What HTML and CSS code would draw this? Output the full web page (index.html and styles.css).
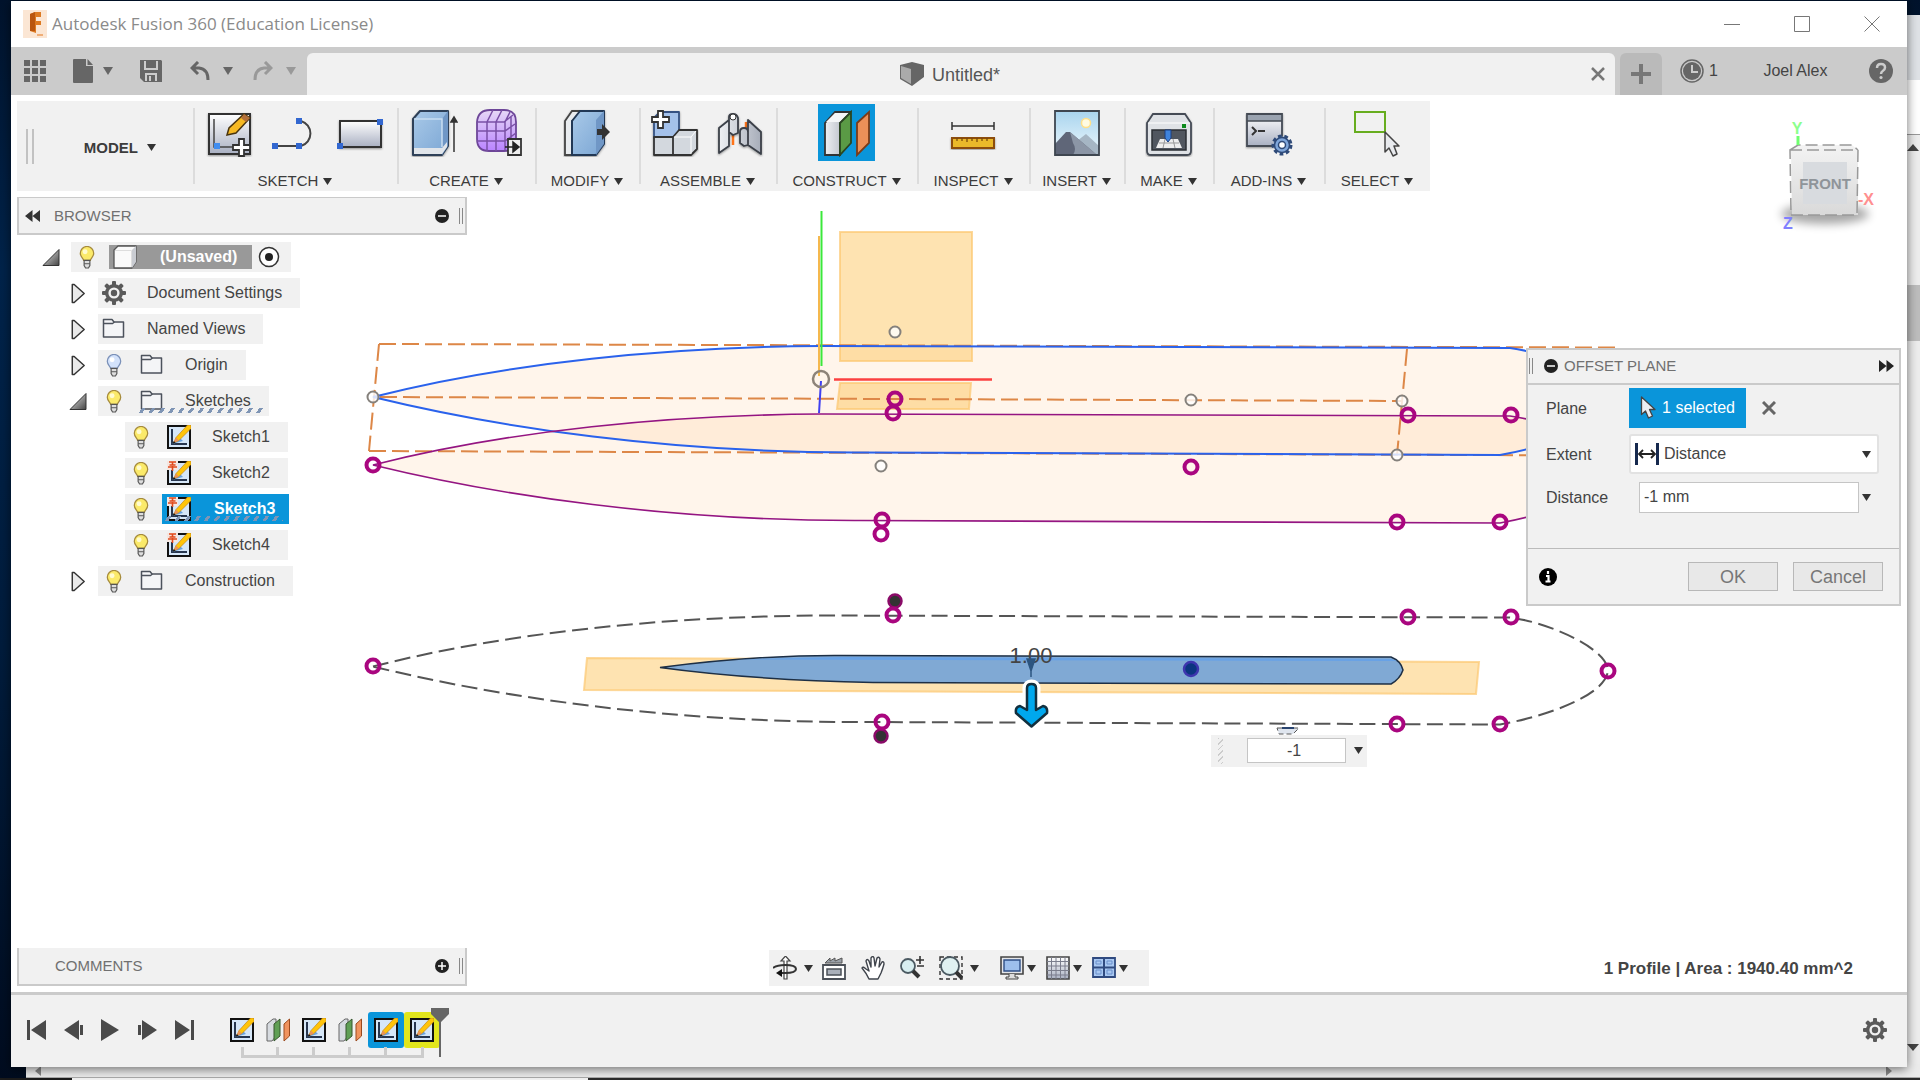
FILE: index.html
```html
<!DOCTYPE html>
<html lang="en">
<head>
<meta charset="utf-8">
<title>Autodesk Fusion 360 (Education License)</title>
<link rel="stylesheet" href="styles.css">
</head>
<body>
<svg class="defs" aria-hidden="true">
  <defs>
    <linearGradient id="steel" x1="0" y1="0" x2="0" y2="1"><stop offset="0" stop-color="#fff"/><stop offset="1" stop-color="#a9b0c2"/></linearGradient>
    <linearGradient id="blueFace" x1="0" y1="0" x2="1" y2="1"><stop offset="0" stop-color="#a9c9e8"/><stop offset="1" stop-color="#7ba6d4"/></linearGradient>
    <linearGradient id="silver" x1="0" y1="0" x2="1" y2="0"><stop offset="0" stop-color="#eef0f3"/><stop offset="1" stop-color="#a7adb9"/></linearGradient>
    <linearGradient id="violet" x1="0" y1="0" x2="0" y2="1"><stop offset="0" stop-color="#e6d8f6"/><stop offset="1" stop-color="#b983ff"/></linearGradient>
    <linearGradient id="sky" x1="0" y1="0" x2="0" y2="1"><stop offset="0" stop-color="#a8d4ee"/><stop offset="1" stop-color="#eef8fd"/></linearGradient>
    <linearGradient id="caretDark" x1="0" y1="0" x2="1" y2="1"><stop offset="0" stop-color="#eee"/><stop offset="1" stop-color="#444"/></linearGradient>
    <linearGradient id="cubeFace" x1="0" y1="0" x2="0" y2="1"><stop offset="0" stop-color="#f3f3f3"/><stop offset="1" stop-color="#d9d9d9"/></linearGradient>
    <filter id="soft" x="-30%" y="-60%" width="160%" height="220%"><feGaussianBlur stdDeviation="5"/></filter>
    <filter id="drop" x="-10%" y="-10%" width="130%" height="130%"><feDropShadow dx="0" dy="1" stdDeviation="1" flood-opacity=".4"/></filter>

    <symbol id="i-down" viewBox="0 0 10 10"><path d="M0 1h10L5 9z" fill="currentColor"/></symbol>

    <symbol id="i-bulb" viewBox="0 0 16 24"><path d="M4.500 15C4.500 13 1 11.500 1 7.500a7 7 0 0 1 14 0C15 11.500 11.500 13 11.500 15z" fill="#fbea6a" stroke="#a58a3c" stroke-width="1.300"/><circle cx="6" cy="6" r="2.600" fill="#fffbd0"/><path d="M5 15h6v5.500L9.500 23h-3L5 20.500z" fill="#ddd" stroke="#555" stroke-width="1.200"/><path d="M5 18.500h6" stroke="#555"/></symbol>
    <symbol id="i-bulb-off" viewBox="0 0 16 24"><path d="M4.500 15C4.500 13 1 11.500 1 7.500a7 7 0 0 1 14 0C15 11.500 11.500 13 11.500 15z" fill="#d3e2fb" stroke="#7a90b8" stroke-width="1.300"/><circle cx="6" cy="6" r="2.600" fill="#fff"/><path d="M5 15h6v5.500L9.500 23h-3L5 20.500z" fill="#ddd" stroke="#555" stroke-width="1.200"/><path d="M5 18.500h6" stroke="#555"/></symbol>
    <symbol id="i-folder" viewBox="0 0 24 24"><path d="M1.500 4V2.500H10L12 5h9.500V20H1.500z" fill="#f4f5f7" stroke="#4c525c" stroke-width="1.500" stroke-linejoin="round"/><path d="M1.500 6.500h9L12.500 5" fill="none" stroke="#4c525c" stroke-width="1.300"/></symbol>
    <symbol id="i-gear" viewBox="0 0 24 24"><g fill="#5a5a5a"><g id="teeth"><rect x="10" y="0" width="4" height="24" rx="1"/><rect x="0" y="10" width="24" height="4" rx="1"/></g><use href="#teeth" transform="rotate(45 12 12)"/><circle cx="12" cy="12" r="9"/></g><circle cx="12" cy="12" r="5.600" fill="#f1f1f1"/><circle cx="12" cy="12" r="3.200" fill="#5a5a5a"/></symbol>
    <symbol id="i-open" viewBox="0 0 18 18"><path d="M1 17h16V1z" fill="url(#caretDark)" stroke="#333" stroke-linejoin="round"/></symbol>
    <symbol id="i-closed" viewBox="0 0 16 22"><path d="M2 1.500h2L14.500 11 4 20.500H2z" fill="#e9e9e9" stroke="#333" stroke-width="1.500" stroke-linejoin="round"/></symbol>
    <symbol id="i-body" viewBox="0 0 24 24"><path d="M1 5 5 1h18v16l-4 6H1z" fill="#fafafa" stroke="#555" stroke-width="1.300" stroke-linejoin="round"/><path d="M19 5l4-4v16l-4 6z" fill="#c9ccd2"/><path d="M2 5.500h16.500V22" fill="none" stroke="#ddd"/></symbol>
    <symbol id="i-sketch" viewBox="0 0 24 24"><rect x="1" y="1" width="22" height="22" fill="#d6e7f8" stroke="#111" stroke-width="2"/><path d="M5 4v15h15" fill="none" stroke="#27364f" stroke-width="2"/><path d="M5 19l7-7 4 4z" fill="#69a3e0"/><path d="M6.500 18 9 12.500 20.500 0H24v3.500L12 15.500z" fill="#ffc40a" stroke="#b87a10" stroke-width=".6"/><path d="M6.500 18 9 12.500 12 15.500z" fill="#e8935a"/><path d="M5.500 19l1.300-3L8.500 17.500z" fill="#111"/></symbol>
    <symbol id="i-sketch-pin" viewBox="0 0 24 24"><use href="#i-sketch"/><path d="M0 0h11v9H0z" fill="#f6e6e0"/><path d="M2 1h7M5.500 1v3M1 6h9M5.500 5v5M2.500 4h6" stroke="#e0491c" stroke-width="1.600" fill="none"/></symbol>
    <symbol id="i-plane" viewBox="0 0 24 24"><path d="M1 6 7 1h3v17l-4 5H1z" fill="#d7dbe0" stroke="#666" stroke-linejoin="round"/><path d="M8 6l6-5v17l-6 5z" fill="#5f9f55" stroke="#37562f"/><path d="M18 6l5.500-5v17L18 23z" fill="#f0935e" stroke="#9b4a1e"/></symbol>
    <symbol id="i-cursor" viewBox="0 0 16 24"><path d="M1.500 1v17.500l4-3.500 3 7 4-2-3-6.500H15z" fill="#eceef2" stroke="#444" stroke-width="1.300" stroke-linejoin="round"/></symbol>
  </defs>
</svg>

<div class="desktop">
  <div class="back-window" aria-hidden="true">
    <div class="back-right">
      <span class="back-tabs"></span><span class="back-page"></span><span class="back-arrow"><svg viewBox="0 0 12 8"><path d="M0 7h12L6 0z"/></svg></span><span class="back-thumb"></span><span class="back-fill"></span><span class="back-arrow"><svg viewBox="0 0 12 8"><path d="M0 0h12L6 7z"/></svg></span>
    </div>
    <div class="back-bottom"><span class="back-tri left"></span><span class="back-tri right"></span></div>
    <div class="taskbar"></div>
  </div>

  <main class="window">
    <header class="titlebar">
      <svg class="logo" viewBox="0 0 24 28"><rect width="24" height="28" fill="#fbe6d4"/><path d="M7 4 12 2h6v5h-5v4h5v4h-5v8l-6-2z" fill="#dd7a22"/><path d="M7 4l5-2v19l-5 0z" fill="#b9560f"/><path d="M14 25h6" stroke="#efae78" stroke-width="2"/></svg>
      <h1>Autodesk Fusion 360 (Education License)</h1>
      <div class="window-buttons">
        <button aria-label="Minimize"><svg viewBox="0 0 16 16"><path d="M0 8.500h16"/></svg></button>
        <button aria-label="Maximize"><svg viewBox="0 0 16 16"><path d="M.5.500h15v15H.5z"/></svg></button>
        <button aria-label="Close"><svg viewBox="0 0 16 16"><path d="M.5.500l15 15M15.500.500l-15 15"/></svg></button>
      </div>
    </header>

    <div class="tabbar">
      <div class="quick">
        <button aria-label="Data panel"><svg width="22" height="22" viewBox="0 0 22 22"><path d="M0 0h6v6H0zM8 0h6v6H8zM16 0h6v6h-6zM0 8h6v6H0zM8 8h6v6H8zM16 8h6v6h-6zM0 16h6v6H0zM8 16h6v6H8zM16 16h6v6h-6z" fill="#666"/></svg></button>
        <button aria-label="File" class="with-caret file"><svg width="20" height="24" viewBox="0 0 20 24"><path d="M1 0h12v7h7v16a1 1 0 0 1-1 1H1a1 1 0 0 1-1-1V1a1 1 0 0 1 1-1z" fill="#666"/><path d="M14.500 0 20 6h-5.500z" fill="#666"/></svg><svg class="caret"><use href="#i-down"/></svg></button>
        <button aria-label="Save" class="save"><svg width="22" height="22" viewBox="0 0 22 22"><path d="M0 0h21l1 1v21H4l-4-4z" fill="#666"/><path d="M5 1v8h12V1" fill="none" stroke="#ccc" stroke-width="2"/><path d="M6 21v-7h10v7M10 16v5" fill="none" stroke="#ccc" stroke-width="2"/></svg></button>
        <button aria-label="Undo" class="with-caret undo"><svg width="20" height="20" viewBox="0 0 20 20"><path d="M8 1 2 7l6 6M2 7h7q9 1 9 12" fill="none" stroke="#666" stroke-width="3"/></svg><svg class="caret"><use href="#i-down"/></svg></button>
        <button aria-label="Redo" class="with-caret redo"><svg width="20" height="20" viewBox="0 0 20 20"><path d="M12 1l6 6-6 6M18 7h-7q-9 1-9 12" fill="none" stroke="#999" stroke-width="3"/></svg><svg class="caret"><use href="#i-down"/></svg></button>
      </div>
      <div class="doc-tab">
        <svg width="24" height="24" viewBox="0 0 24 24"><path d="M0 3 12 0l12 3v12l-12 9L0 17z" fill="#666"/><path d="M1 4l10 3v15L1 16z" fill="#aaa"/></svg>
        <span>Untitled*</span>
        <button class="tab-close" aria-label="Close tab"><svg width="14" height="14" viewBox="0 0 14 14"><path d="M1 1l12 12M13 1 1 13" stroke="#777" stroke-width="2.500"/></svg></button>
      </div>
      <button class="new-tab" aria-label="New tab"><svg width="20" height="20" viewBox="0 0 20 20"><path d="M10 0v20M0 10h20" stroke="#777" stroke-width="4"/></svg></button>
      <div class="account">
        <button class="jobs"><svg width="24" height="24" viewBox="0 0 24 24"><circle cx="12" cy="12" r="11" fill="none" stroke="#666" stroke-width="1.500"/><circle cx="12" cy="12" r="9" fill="#666"/><path d="M12 6v7h6" fill="none" stroke="#ccc" stroke-width="2"/></svg>1</button>
        <button class="user">Joel Alex</button>
        <button aria-label="Help"><svg width="24" height="24" viewBox="0 0 24 24"><circle cx="12" cy="12" r="12" fill="#666"/><path d="M8 9q0-4 4-4t4 3.500q0 2-2 3.200T12 15" fill="none" stroke="#ccc" stroke-width="2.500"/><circle cx="12" cy="18.500" r="1.600" fill="#ccc"/></svg></button>
      </div>
    </div>

    <section class="viewport">
      <svg class="canvas" viewBox="11 95 1896 897" aria-label="Model canvas">
        <defs>
          <path id="hull" d="M373 397C510 362 670 347 821 346L1510 348C1545 352 1607 378 1608 401C1606 425 1550 446 1500 455L860 452.500C670 453 500 428 373 397z"/>
          <g id="node"><circle r="6.500" fill="none" stroke="#a9067f" stroke-width="4"/></g>
          <g id="dot"><circle r="6.500" fill="#333" stroke="#8a0a68" stroke-width="2.500"/></g>
          <g id="pt"><circle r="5.500" fill="#fff" fill-opacity=".8" stroke="#85817c" stroke-width="2"/></g>
        </defs>
        <use href="#hull" fill="#ffa038" fill-opacity=".1"/>
        <use href="#hull" y="68" fill="#ffa038" fill-opacity=".1"/>
        <g fill="#fcb93c" fill-opacity=".4" stroke="#fcc870" stroke-opacity=".7" stroke-width="2">
          <path d="M840 232h132v129H840zM840 383h131l-2 26H837zM587 658l892 4-3 32-892-4z"/>
        </g>
        <g fill="none" stroke="#dd8747" stroke-width="2" stroke-dasharray="17 6">
          <path d="M379 344 1615 347.500M379 344 369 451M369 451 1610 455.500M380 397 1402 401M1407 349 1397 455"/>
        </g>
        <use href="#hull" fill="none" stroke="#2a62ec" stroke-width="2"/>
        <use href="#hull" y="68" fill="none" stroke="#941582" stroke-width="1.600"/>
        <use href="#hull" y="269.500" fill="none" stroke="#555" stroke-width="2" stroke-dasharray="16 6.500"/>
        <path d="M819 236v140" stroke="#f5b84e" stroke-width="2"/>
        <path d="M821.500 211v155" stroke="#3be83b" stroke-width="2"/>
        <path d="M834 379.500h158" stroke="#fb4040" stroke-width="2.500"/>
        <path d="M821 381l-2 32" stroke="#4040f0" stroke-width="2"/>
        <circle cx="821" cy="379" r="8" fill="none" stroke="#8d8379" stroke-width="2.500"/>
        <path d="M660 667.500C710 661 770 655 842 655.500L1391 657Q1401 661 1403 670Q1400 679 1391 684L873 682.500C800 681 730 677 660 667.500z" fill="#80a9d4" stroke="#1d2f45" stroke-width="1.500"/>
        <path d="M735 659.500 842 657l549 2 6 2z" fill="#68a2e6"/>
        <text x="1031" y="663" class="dim">1.00</text>
        <path d="M1031 659v18M1027 659l4 12 4-12z" stroke="#2c5580" stroke-width="1.500" fill="#2c5580"/>
        <use href="#pt" x="895" y="332"/><use href="#pt" x="881" y="466"/><use href="#pt" x="373" y="397"/><use href="#pt" x="1191" y="400"/><use href="#pt" x="1402" y="401"/><use href="#pt" x="1397" y="455"/>
        <use href="#node" x="895" y="399"/><use href="#node" x="893" y="413"/><use href="#node" x="882" y="520"/><use href="#node" x="881" y="534"/><use href="#node" x="373" y="465"/><use href="#node" x="1191" y="467"/><use href="#node" x="1408" y="415"/><use href="#node" x="1511" y="415"/><use href="#node" x="1397" y="522"/><use href="#node" x="1500" y="522"/>
        <use href="#dot" x="895" y="601"/><use href="#dot" x="881" y="736"/>
        <use href="#node" x="893" y="615"/><use href="#node" x="882" y="722"/><use href="#node" x="373" y="666"/><use href="#node" x="1408" y="617"/><use href="#node" x="1511" y="617"/><use href="#node" x="1608" y="671"/><use href="#node" x="1397" y="724"/><use href="#node" x="1500" y="724"/>
        <circle cx="1191" cy="669" r="7" fill="#0b3580" stroke="#3d35ae" stroke-width="2.500"/>
        <path d="M1027 688q0-4 4.500-4t4.500 4v22l7-4q5 1 4 7l-15.500 13.500L1016 713q-1-6 4-7l7 4z" fill="#00a8ee" stroke="#fff" stroke-width="9" stroke-linejoin="round"/>
        <path d="M1027 688q0-4 4.500-4t4.500 4v22l7-4q5 1 4 7l-15.500 13.500L1016 713q-1-6 4-7l7 4z" fill="#00a8ee" stroke="#12303f" stroke-width="2.500" stroke-linejoin="round"/>
        <path d="M1277 728h22l-6 6h-14z" fill="#dfe5ee" stroke="#555" stroke-dasharray="5 3"/><path d="M1282 728h12" stroke="#29436f" stroke-width="2"/>
      </svg>

      <nav class="toolbar" aria-label="Model toolbar">
        <div class="group workspace"><span class="grip"></span><button class="menu model">MODEL<svg class="caret"><use href="#i-down"/></svg></button></div>
        <div class="group">
          <div class="tools">
            <button aria-label="Create sketch"><svg class="tool" viewBox="0 0 48 48"><g filter="url(#drop)"><path d="M3 5h41v40H3z" fill="url(#steel)" stroke="#333" stroke-width="2"/><path d="M8 10v28h30" fill="none" stroke="#444" stroke-width="1.500"/><path d="M8 34h6v6H8z" fill="#3f8df0"/><path d="M21 26l2-7L38 5l6 4-14 15z" fill="#f6b923" stroke="#4a3510" stroke-width="1.500"/><path d="M38 5l6 4-4 4-5-4z" fill="#b2703a"/><path d="M33 30h5v6h6v5h-6v6h-5v-6h-6v-5h6z" fill="#fff" stroke="#333" stroke-width="1.800"/></g></svg></button>
            <button aria-label="Line"><svg class="tool" viewBox="0 0 48 48"><path d="M4 37h26a13 13 0 0 0 0-25h-2" fill="none" stroke="#444" stroke-width="2"/><path d="M1 34h6v6H1zM25 34h6v6h-6zM25 9h6v6h-6z" fill="#3267d0"/></svg></button>
            <button aria-label="Rectangle"><svg class="tool" viewBox="0 0 48 48"><g filter="url(#drop)"><path d="M4 12h41v26H4z" fill="url(#steel)" stroke="#333" stroke-width="2"/></g><path d="M1 34h6v6H1zM41 10h6v6h-6z" fill="#3267d0"/></svg></button>
          </div>
          <button class="menu">SKETCH<svg class="caret"><use href="#i-down"/></svg></button>
        </div>
        <div class="group">
          <div class="tools">
            <button aria-label="Extrude"><svg class="tool" viewBox="0 0 48 48"><g filter="url(#drop)"><path d="M3 10 10 2h28v35l-6 9H3z" fill="url(#blueFace)" stroke="#2e4058" stroke-width="2" stroke-linejoin="round"/><path d="M32 10l6-8v35l-6 9z" fill="#6f97c6"/><path d="M4 39h28l5-6v5l-5 7H4z" fill="#e1e5ea"/><path d="M4 10h28v28" fill="none" stroke="#c9def2" stroke-width="1.500"/></g><path d="M44 43V10M41 13l3-5 3 5z" stroke="#333" stroke-width="1.500" fill="#333"/></svg></button>
            <button aria-label="Create form"><svg class="tool" viewBox="0 0 48 48"><path d="M2 13Q3 1 15 1h14q12 0 12 12v16q0 13-12 13H14Q2 42 2 30z" fill="url(#violet)" stroke="#6d4698" stroke-width="1.800"/><path d="M2 22h28l10-7M2 32h28l11-8M3 13h26l9-7M12 42V13l6-12M21 42V13l6-12M30 41V13l5-10M36 37V8" fill="none" stroke="#7a50a6" stroke-width="1.500"/><path d="M33 30h13v16H33z" fill="#eee" stroke="#333" stroke-width="1.800"/><path d="M30 38h9M38 33l6 5-6 5z" fill="#222" stroke="#222" stroke-width="1.500"/></svg></button>
          </div>
          <button class="menu">CREATE<svg class="caret"><use href="#i-down"/></svg></button>
        </div>
        <div class="group">
          <div class="tools">
            <button aria-label="Press pull"><svg class="tool" viewBox="0 0 48 48"><g filter="url(#drop)"><path d="M2 12 9 2h14L9 12v34H2z" fill="#e9ecef" stroke="#444" stroke-width="1.800"/><path d="M9 12 17 2h24v33l-8 11H9z" fill="url(#blueFace)" stroke="#243954" stroke-width="2" stroke-linejoin="round"/><path d="M33 11l8-9v33l-8 11z" fill="#6f97c6"/></g><path d="M34 20h5v-5l8 8-8 8v-5h-5z" fill="#333"/></svg></button>
          </div>
          <button class="menu">MODIFY<svg class="caret"><use href="#i-down"/></svg></button>
        </div>
        <div class="group">
          <div class="tools">
            <button aria-label="New component"><svg class="tool" viewBox="0 0 48 48"><g filter="url(#drop)" stroke-linejoin="round"><path d="M3 9 9 3h19v20l-5 6H3z" fill="#a4c1ea" stroke="#345182" stroke-width="1.800"/><path d="M3 28h19v18H3zM22 28l6-7h18v19l-6 6H22z" fill="#d3d8de" stroke="#333" stroke-width="1.800"/><path d="M23 28h17l5-6M40 28v17" fill="none" stroke="#fff"/></g><path d="M7 2h5v6h6v5h-6v6H7v-6H1V8h6z" fill="#fff" stroke="#333" stroke-width="1.800"/></svg></button>
            <button aria-label="Joint"><svg class="tool" viewBox="0 0 48 48"><path d="M17 22v14M30 13v14" stroke="#ff7419" stroke-width="2.500"/><g filter="url(#drop)" fill="url(#silver)" stroke="#3b4048" stroke-width="1.800" stroke-linejoin="round"><path d="M3 19 13 11v26L3 44zM13 8q0-3 4-3t5 4v15l-5 2-4-3zM24 23q0-4 4-4t4 4v13l-4 1-4-3zM32 11l13 12v22L32 36z"/></g><circle cx="17" cy="8" r="3" fill="#fff" stroke="#333"/></svg></button>
          </div>
          <button class="menu">ASSEMBLE<svg class="caret"><use href="#i-down"/></svg></button>
        </div>
        <div class="group">
          <div class="tools">
            <button class="active" aria-label="Offset plane"><svg class="tool" viewBox="0 0 48 48"><path d="M2 14 12 3h15L17 14v32H2z" fill="url(#silver)" stroke="#333" stroke-width="1.800"/><path d="M3 13 12 4h14l-9 9z" fill="#f4f6f8"/><path d="M17 14 28 3v31L17 46z" fill="#5a9a45" stroke="#2a4522" stroke-width="1.800"/><path d="M34 14 46 3v31L34 46z" fill="#eb9058" stroke="#7a3b18" stroke-width="1.800"/></svg></button>
          </div>
          <button class="menu">CONSTRUCT<svg class="caret"><use href="#i-down"/></svg></button>
        </div>
        <div class="group">
          <div class="tools">
            <button aria-label="Measure"><svg class="tool" viewBox="0 0 48 48"><path d="M3 13v8M45 13v8M3 17h42" stroke="#333" stroke-width="1.500"/><g filter="url(#drop)"><path d="M3 29h42v10H3z" fill="#eab92c" stroke="#8c4e0c" stroke-width="2"/></g><path d="M8 29v3M13 29v3M18 29v4M23 29v3M28 29v4M33 29v3M38 29v3" stroke="#7a4a0c" stroke-width="1.300"/></svg></button>
          </div>
          <button class="menu">INSPECT<svg class="caret"><use href="#i-down"/></svg></button>
        </div>
        <div class="group">
          <div class="tools">
            <button aria-label="Insert image"><svg class="tool" viewBox="0 0 48 48"><path d="M2 2h44v44H2z" fill="url(#sky)"/><circle cx="33" cy="14" r="4.500" fill="#fffbe2" stroke="#ffe08a" stroke-width="1.500"/><path d="M24 32l9-7 13 12v9H24z" fill="#a6b6c4"/><path d="M2 35 13 23h4l27 23H2z" fill="#5f6678"/><path d="M17 23l27 23H20q4-6 0-12z" fill="#8c96a6"/><path d="M2 2h44v44H2z" fill="none" stroke="#3e4650" stroke-width="1.800"/></svg></button>
          </div>
          <button class="menu">INSERT<svg class="caret"><use href="#i-down"/></svg></button>
        </div>
        <div class="group">
          <div class="tools">
            <button aria-label="3D print"><svg class="tool" viewBox="0 0 48 48"><g filter="url(#drop)"><path d="M2 14 8 5h32l6 9v28q0 4-4 4H6q-4 0-4-4z" fill="#dfe2e6" stroke="#444b55" stroke-width="1.800"/><path d="M3 14h42" stroke="#fff"/></g><path d="M7 21h34v20H7z" fill="#50565f" stroke="#2b2f35" stroke-width="1.500"/><path d="M15 30h18l4 9H11z" fill="#eee"/><path d="M14 34h20M20 30l-2 9M28 30l2 9" stroke="#999"/><path d="M20 21h6v8l-3 4-3-4z" fill="#3f83dc" stroke="#1d3f80"/><path d="M37 15h4v4h-4z" fill="#0c8a1c"/></svg></button>
          </div>
          <button class="menu">MAKE<svg class="caret"><use href="#i-down"/></svg></button>
        </div>
        <div class="group">
          <div class="tools">
            <button aria-label="Scripts and add-ins"><svg class="tool" viewBox="0 0 48 48"><g filter="url(#drop)"><path d="M2 5h35v32H2z" fill="url(#steel)" stroke="#444b55" stroke-width="1.800"/><path d="M3 6h33v6H3z" fill="#9aa3b0"/></g><path d="M2 12h35" stroke="#444b55" stroke-width="1.500"/><path d="M7 18l4 4-4 4M13 22h7" fill="none" stroke="#333" stroke-width="2"/><g fill="#7fa6da" stroke="#2f4a78" stroke-width="1.500"><circle cx="37" cy="36" r="8.500" stroke-dasharray="3.500 2.500" stroke-width="4"/><circle cx="37" cy="36" r="7.500"/><circle cx="37" cy="36" r="3.500" fill="#fff"/></g></svg></button>
          </div>
          <button class="menu">ADD-INS<svg class="caret"><use href="#i-down"/></svg></button>
        </div>
        <div class="group">
          <div class="tools">
            <button aria-label="Select"><svg class="tool" viewBox="0 0 48 48"><path d="M2 3h30v20H2z" fill="none" stroke="#67ad1f" stroke-width="2"/><path d="M32 23v20l4-4 4 8 4-2-3-8h5z" fill="#e8eaee" stroke="#444" stroke-width="1.500" stroke-linejoin="round"/></svg></button>
          </div>
          <button class="menu">SELECT<svg class="caret"><use href="#i-down"/></svg></button>
        </div>
      </nav>

      <aside class="browser">
        <div class="panel-head">
          <button aria-label="Collapse"><svg width="15" height="12" viewBox="0 0 15 12"><path d="M7.500 0v12L0 6zM15 0v12L7.500 6z" fill="#333"/></svg></button>
          <h2>BROWSER</h2>
          <button aria-label="Minimize panel"><svg width="14" height="14" viewBox="0 0 14 14"><circle cx="7" cy="7" r="7" fill="#222"/><path d="M3 7h8" stroke="#fff" stroke-width="1.500"/></svg></button>
          <span class="edge"></span>
        </div>
        <ul class="tree">
          <li class="root"><svg class="tw"><use href="#i-open"/></svg><span class="item"><svg class="bulb"><use href="#i-bulb"/></svg><span class="doc"><svg class="ic"><use href="#i-body"/></svg>(Unsaved)</span><svg class="radio" viewBox="0 0 22 22"><circle cx="11" cy="11" r="9.500" fill="#fff" stroke="#333" stroke-width="1.500"/><circle cx="11" cy="11" r="4" fill="#222"/></svg></span></li>
          <li><svg class="tw"><use href="#i-closed"/></svg><span class="item"><svg class="ic first"><use href="#i-gear"/></svg><span>Document Settings</span></span></li>
          <li><svg class="tw"><use href="#i-closed"/></svg><span class="item"><svg class="ic first"><use href="#i-folder"/></svg><span>Named Views</span></span></li>
          <li><svg class="tw"><use href="#i-closed"/></svg><span class="item"><svg class="bulb"><use href="#i-bulb-off"/></svg><svg class="ic"><use href="#i-folder"/></svg><span>Origin</span></span></li>
          <li><svg class="tw"><use href="#i-open"/></svg><span class="item"><svg class="bulb"><use href="#i-bulb"/></svg><span class="hatched"><svg class="ic"><use href="#i-folder"/></svg><span>Sketches</span></span></span></li>
          <li class="leaf"><span class="item"><svg class="bulb"><use href="#i-bulb"/></svg><svg class="ic"><use href="#i-sketch"/></svg><span>Sketch1</span></span></li>
          <li class="leaf"><span class="item"><svg class="bulb"><use href="#i-bulb"/></svg><svg class="ic"><use href="#i-sketch-pin"/></svg><span>Sketch2</span></span></li>
          <li class="leaf"><span class="item on"><svg class="bulb"><use href="#i-bulb"/></svg><span class="picked hatched"><svg class="ic"><use href="#i-sketch-pin"/></svg><span>Sketch3</span></span></span></li>
          <li class="leaf"><span class="item"><svg class="bulb"><use href="#i-bulb"/></svg><svg class="ic"><use href="#i-sketch-pin"/></svg><span>Sketch4</span></span></li>
          <li><svg class="tw"><use href="#i-closed"/></svg><span class="item"><svg class="bulb"><use href="#i-bulb"/></svg><svg class="ic"><use href="#i-folder"/></svg><span>Construction</span></span></li>
        </ul>
      </aside>

      <svg class="viewcube" viewBox="0 0 110 120" aria-label="View cube">
        <ellipse cx="56" cy="99" rx="44" ry="10" fill="#000" opacity=".35" filter="url(#soft)"/>
        <path d="M22 35 28 30h55l6 5v65H23z" fill="url(#cubeFace)"/>
        <path d="M34 47h44v42H34z" fill="#d8dbdf"/>
        <path d="M21 35h68l-1 65H22zM21 35l8-5h54l6 5" fill="none" stroke="#999" stroke-width="1.500" stroke-dasharray="12 5"/>
        <path d="M29 21v9" stroke="#6fff6f" stroke-width="3"/>
        <text x="28" y="19" fill="#8dff8d">Y</text><text x="97" y="90" fill="#ff8f8f">-X</text><text x="19" y="114" fill="#8080ff">Z</text>
        <text x="56" y="74" class="face">FRONT</text>
      </svg>

      <form class="dialog" aria-label="Offset plane">
        <div class="dialog-head">
          <span class="edge"></span>
          <svg width="14" height="14" viewBox="0 0 14 14"><circle cx="7" cy="7" r="7" fill="#222"/><path d="M3 7h8" stroke="#fff" stroke-width="1.500"/></svg>
          <h2>OFFSET PLANE</h2>
          <svg width="15" height="12" viewBox="0 0 15 12"><path d="M0 0v12l7.500-6zM7.500 0v12L15 6z" fill="#222"/></svg>
        </div>
        <div class="dialog-body">
          <label for="plane">Plane</label>
          <div class="field"><button type="button" id="plane" class="selected"><svg><use href="#i-cursor"/></svg>1 selected</button><button type="button" class="clear" aria-label="Clear selection"><svg width="14" height="14" viewBox="0 0 14 14"><path d="M1 1l12 12M13 1 1 13" stroke="#666" stroke-width="3"/></svg></button></div>
          <label for="extent">Extent</label>
          <div class="field combo"><svg class="extent-icon" viewBox="0 0 24 22"><path d="M1.500 0v22M22.500 0v22" stroke="#16294e" stroke-width="3"/><path d="M4 11h16M8 7l-4 4 4 4M16 7l4 4-4 4" fill="none" stroke="#222" stroke-width="1.800"/></svg><select id="extent"><option>Distance</option></select><svg class="caret"><use href="#i-down"/></svg></div>
          <label for="distance">Distance</label>
          <div class="field value"><input id="distance" type="text" value="-1 mm"><svg class="caret"><use href="#i-down"/></svg></div>
        </div>
        <div class="dialog-foot">
          <svg width="18" height="18" viewBox="0 0 18 18"><circle cx="9" cy="9" r="9" fill="#000"/><path d="M9 3v3M7 8h2.500v5M6.500 13.500h5" stroke="#fff" stroke-width="2.200" fill="none"/></svg>
          <button type="button">OK</button><button type="button">Cancel</button>
        </div>
      </form>

      <div class="hud"><span class="hud-grip"></span><input type="text" aria-label="Offset value" value="-1"><svg class="caret"><use href="#i-down"/></svg></div>

      <div class="comments panel-head"><h2>COMMENTS</h2><button aria-label="Expand comments"><svg width="14" height="14" viewBox="0 0 14 14"><circle cx="7" cy="7" r="7" fill="#222"/><path d="M3 7h8M7 3v8" stroke="#fff" stroke-width="1.500"/></svg></button><span class="edge"></span></div>

      <nav class="navbar" aria-label="Navigation">
        <button aria-label="Orbit" class="wide"><svg class="ic" viewBox="0 0 24 24"><path d="M11 5v18h3V5h3L12.500 0 8 5z" fill="#fff" stroke="#444" stroke-width="1.200"/><path d="M0 12q4-3 12-3 11 0 11 4t-11 4H5" fill="none" stroke="#333" stroke-width="2"/><path d="M3 17l6-4v8z" fill="#111"/></svg><svg class="caret"><use href="#i-down"/></svg></button>
        <button aria-label="Look at"><svg class="ic" viewBox="0 0 24 24"><path d="M1 9h22v14H1z" fill="#fff" stroke="#4b5058" stroke-width="1.800"/><path d="M5 13h14v6H5z" fill="#aab0ba" stroke="#4b5058" stroke-width="1.500"/><path d="M3 7l5-5v3l5-3v3l7-3v5z" fill="#9aa0a8" stroke="#555"/></svg></button>
        <button aria-label="Pan"><svg class="ic" viewBox="0 0 24 24"><path d="M8 23Q6 18 1 12q1-2 4 1l3 2L5 5q1-3 3 0l2 6V2q2-3 3 0l1 8 2-8q2-2 3 1l-1 8 3-5q2-1 2 2-1 4-3 9l-3 6z" fill="#fff" stroke="#3f444c" stroke-width="1.400" stroke-linejoin="round"/></svg></button>
        <button aria-label="Zoom"><svg class="ic" viewBox="0 0 24 24"><circle cx="8" cy="10" r="7" fill="#d8eef0" stroke="#4b5a62" stroke-width="1.800"/><path d="M13 15l6 6" stroke="#333" stroke-width="4"/><path d="M20 0v8M16 4h8M17 10h7" stroke="#333" stroke-width="1.600"/></svg></button>
        <button aria-label="Fit" class="wide"><svg class="ic" viewBox="0 0 24 24"><path d="M1 1h22v22H1z" fill="none" stroke="#333" stroke-width="1.400" stroke-dasharray="4 3"/><circle cx="11" cy="10" r="9" fill="#dff1f1" stroke="#4b5a62" stroke-width="1.800"/><path d="M17 16l6 6" stroke="#333" stroke-width="4"/></svg><svg class="caret"><use href="#i-down"/></svg></button>
        <button aria-label="Display settings" class="wide tight display"><svg class="ic" viewBox="0 0 24 24"><path d="M1 1h22v17H1z" fill="#e4e6ea" stroke="#444" stroke-width="1.600"/><path d="M4 4h16v11H4z" fill="#9dbfec" stroke="#2e4f86" stroke-width="1.400"/><path d="M9 18v3H6v2h12v-2h-3v-3" fill="#ddd" stroke="#444"/></svg><svg class="caret"><use href="#i-down"/></svg></button>
        <button aria-label="Grid settings" class="wide tight"><svg class="ic" viewBox="0 0 24 24"><path d="M1 1h22v22H1z" fill="url(#steel)" stroke="#444" stroke-width="1.600"/><path d="M5.500 1v22M10 1v22M14.500 1v22M19 1v22M1 5.500h22M1 10h22M1 14.500h22M1 19h22" stroke="#7a7d8c"/></svg><svg class="caret"><use href="#i-down"/></svg></button>
        <button aria-label="Viewports" class="wide tight"><svg class="ic" viewBox="0 0 24 24"><path d="M1 2h22v19H1z" fill="#a9c8f2" stroke="#2f4a80" stroke-width="1.800"/><path d="M12 2v19M1 11.500h22" stroke="#2f4a80" stroke-width="2"/><path d="M4 5h5v3H4zM15 5h5v3h-5zM4 14h5v4H4zM15 14h5v4h-5z" fill="none" stroke="#6a90cc"/></svg><svg class="caret"><use href="#i-down"/></svg></button>
      </nav>

      <p class="status">1 Profile | Area : 1940.40 mm^2</p>
    </section>

    <footer class="timeline">
      <div class="playback">
        <button aria-label="Go to start"><svg viewBox="0 0 20 22"><path d="M0 1h3v20H0zM19 1v20L4 11z"/></svg></button>
        <button aria-label="Step back"><svg viewBox="0 0 20 22"><path d="M15 1v20L0 11zM16 6h3v10h-3z"/></svg></button>
        <button aria-label="Play"><svg viewBox="0 0 20 22"><path d="M0 0v22l18-11z"/></svg></button>
        <button aria-label="Step forward"><svg viewBox="0 0 20 22"><path d="M4 1v20l15-10zM0 6h3v10H0z"/></svg></button>
        <button aria-label="Go to end"><svg viewBox="0 0 20 22"><path d="M16 1h3v20h-3zM0 1v20l15-10z"/></svg></button>
      </div>
      <div class="features">
        <button aria-label="Sketch1"><svg class="ic"><use href="#i-sketch"/></svg></button>
        <button aria-label="Plane1"><svg class="ic"><use href="#i-plane"/></svg></button>
        <button aria-label="Sketch2"><svg class="ic"><use href="#i-sketch"/></svg></button>
        <button aria-label="Plane2"><svg class="ic"><use href="#i-plane"/></svg></button>
        <button aria-label="Sketch3" class="blue"><svg class="ic"><use href="#i-sketch"/></svg></button>
        <button aria-label="Sketch4" class="yellow"><svg class="ic"><use href="#i-sketch"/></svg></button>
        <svg class="track" viewBox="0 0 184 12"><path d="M1.500 0v9.500h180V0M36.500 0v9M72.500 0v9M108.500 0v9M144.500 0v9" fill="none" stroke="#ccc" stroke-width="3"/></svg>
        <svg class="marker" viewBox="0 0 18 49"><path d="M0 0h18v6l-8 8v35H8V14L0 6z" fill="#666"/></svg>
      </div>
      <button class="settings" aria-label="Timeline settings"><svg class="ic"><use href="#i-gear"/></svg></button>
    </footer>
  </main>
</div>
</body>
</html>
```
FILE: styles.css
```css
* { box-sizing: border-box; }
body { margin: 0; font: 16px/20px "Liberation Sans", Arial, sans-serif; color: #444; }
h1, h2, p, ul { margin: 0; padding: 0; font-weight: normal; }
ul { list-style: none; }
button { display: flex; align-items: center; justify-content: center; padding: 0; border: 0; background: none; font: inherit; color: inherit; }
svg { display: block; flex: none; }
.defs { position: absolute; width: 0; height: 0; }
.caret { width: 9px; height: 9px; color: #333; }
.ic { width: 24px; height: 24px; }

/* Desktop and the window behind */
.desktop { position: relative; display: flex; height: 100vh; overflow: hidden; background: linear-gradient(#00132c, #00234a 25%, #001c3c 60%, #000c1f); }
.back-window { position: absolute; inset: 0; }
.back-right { position: absolute; inset: 15px 0 0 auto; width: 200px; display: flex; flex-direction: column; align-items: flex-end; background: #ededed; }
.back-tabs { width: 100%; height: 65px; background: #dfe2e6; }
.back-page { width: 100%; height: 55px; background: #fff; border-bottom: 1px solid #999; }
.back-arrow { display: flex; align-items: center; width: 13px; height: 26px; }
.back-arrow svg { width: 12px; height: 8px; fill: #444; }
.back-thumb { width: 13px; height: 56px; margin-top: 124px; background: #bdbdbd; }
.back-fill { flex: 1; max-height: 694px; }
.back-bottom { position: absolute; inset: auto 0 2px 26px; height: 14px; display: flex; align-items: center; justify-content: space-between; padding: 0 28px 0 9px; background: #ececec; border-bottom: 1px solid #aaa; }
.back-tri { border: 5px solid transparent; }
.back-tri.left { border-left: 0; border-right: 6px solid #888; }
.back-tri.right { border-right: 0; border-left: 6px solid #888; }
.taskbar { position: absolute; inset: auto 0 0 0; height: 2px; background: linear-gradient(90deg, #1b1b1b 72px, #f1f1f1 72px 588px, #2b2b2b 588px); }

.window { position: relative; flex: 1; display: flex; flex-direction: column; min-width: 0; margin: 1px 13px 13px 11px; background: #fff; box-shadow: 0 2px 10px rgba(0, 0, 0, .55); }

/* Title bar */
.titlebar { display: flex; align-items: center; height: 46px; padding: 0 27px 0 12px; }
.logo { width: 24px; height: 28px; }
.titlebar h1 { flex: 1; margin-left: 5px; font: 17px/24px "Open Sans", sans-serif; color: #8a8a8a; }
.window-buttons { display: flex; gap: 54px; }
.window-buttons svg { width: 16px; height: 16px; fill: none; stroke: #777; }

/* Tab bar */
.tabbar { display: flex; height: 48px; padding-top: 6px; background: #cbcbcb; }
.quick { display: flex; align-items: center; width: 296px; padding: 0 11px 6px 13px; }
.with-caret { gap: 10px; }
.file { margin-left: 27px; }
.save { margin-left: 27px; }
.undo { margin-left: 28px; }
.redo { margin-left: 20px; }
.undo, .redo { gap: 13px; }
.quick .caret { width: 10px; height: 10px; color: #666; }
.redo .caret { color: #999; }
.doc-tab { position: relative; flex: 1; display: flex; align-items: center; justify-content: center; gap: 8px; padding-right: 22px; border-radius: 6px 6px 0 0; background: #f1f1f1; font-size: 18px; color: #555; }
.doc-tab span { line-height: 24px; padding-top: 2px; }
.tab-close { position: absolute; right: 10px; }
.new-tab { width: 42px; margin-left: 5px; border-radius: 6px 6px 0 0; background: #bababa; }
.account { display: flex; align-items: center; width: 245px; padding: 0 14px 6px 18px; justify-content: space-between; }
.jobs { gap: 5px; }
.user { margin-left: 22px; margin-right: 18px; }

/* Viewport */
.viewport { position: relative; flex: 1; min-height: 0; padding: 6px; }
.canvas { position: absolute; inset: 0; width: 100%; height: 100%; }
.dim { font-size: 22px; text-anchor: middle; fill: #444; }

.toolbar { position: relative; display: grid; width: max-content; grid-template-columns: 176px 204px 138px 104px 137px 141px 112px 95px 89px 111px 106px; height: 90px; background: #f1f1f1; }
.group { position: relative; display: flex; flex-direction: column; align-items: center; padding-top: 3px; }
.group + .group::before { content: ""; position: absolute; left: 0; top: 7px; bottom: 7px; width: 2px; background: #dcdcdc; }
.tools { display: flex; align-items: center; gap: 17px; height: 57px; }
.tool { width: 48px; height: 48px; }
.active { width: 57px; height: 57px; background: #0a95da; }
.menu { gap: 5px; height: 20px; margin-top: 10px; font-size: 15px; color: #3c3c3c; }
.workspace { flex-direction: row; padding: 0 37px 0 9px; justify-content: space-between; }
.grip { width: 8px; height: 35px; border: solid #c2c2c2; border-width: 0 2px; }
.model { margin: 3px 0 0; gap: 9px; font-size: 15px; font-weight: bold; }

.panel-head { display: flex; align-items: center; gap: 12px; width: 450px; height: 38px; padding: 0 2px 0 6px; background: #f1f1f1; border: 2px solid #cacaca; border-width: 1px 2px 2px; }
.panel-head h2, .dialog-head h2 { flex: 1; font-size: 15px; color: #707070; }
.edge { width: 4px; height: 16px; border: solid #888; border-width: 0 1px; }
.panel-head .edge { margin-left: -2px; }

.browser { position: relative; width: 450px; margin-top: 6px; }
.browser .panel-head h2 { margin-left: 2px; }
.tree { display: flex; flex-direction: column; gap: 6px; padding-top: 7px; }
.tree li { display: flex; align-items: center; height: 30px; padding-left: 52px; }
.tree .root { padding-left: 25px; }
.tree .leaf { padding-left: 108px; }
.tw { width: 18px; height: 21px; margin-right: 11px; }
.item { display: flex; align-items: center; height: 30px; padding: 0 18px 0 8px; background: #f1f1f1; }
.item > span:last-child { padding-left: 21px; }
.item > .first { margin-left: -4px; }
.bulb { width: 16px; height: 23px; margin-right: 18px; }
.root .item { padding: 0 11px 0 8px; gap: 6px; }
.root .bulb { margin-right: 8px; }
.doc { display: flex; align-items: center; gap: 23px; height: 24px; padding: 0 15px 0 4px; background: #999; color: #fff; font-weight: bold; }
.radio { width: 22px; height: 22px; }
.item > .hatched:last-child { padding-left: 0; }
.hatched { position: relative; display: flex; align-items: center; gap: 21px; height: 30px; }
.hatched::after { content: ""; position: absolute; left: -4px; right: -15px; bottom: 3px; height: 5px; background: repeating-linear-gradient(125deg, transparent 0 5px, #7f95b5 5px 8px); }
.item.on { padding-right: 0; }
.on .bulb { margin-right: 13px; }
.item > .picked:last-child { gap: 23px; padding: 0 14px 0 5px; background: #0a95da; color: #fff; font-weight: bold; }
.picked::after { left: 0; right: 6px; }

.viewcube { position: absolute; right: 28px; top: 20px; width: 110px; height: 120px; }
.viewcube text { font: bold 16px "Liberation Sans", Arial, sans-serif; text-anchor: middle; }
.viewcube .face { font-size: 15px; fill: #8f9499; }

/* Offset plane dialog */
.dialog { position: absolute; right: 6px; top: 253px; width: 375px; background: #f1f1f1; border: 2px solid #cacaca; }
.dialog-head { display: flex; align-items: center; gap: 6px; height: 35px; padding: 0 5px 2px 1px; border-bottom: 2px solid #cacaca; }
.dialog-head .edge { margin-right: 5px; }
.dialog-body { display: grid; grid-template-columns: 83px 250px; grid-template-rows: 40px 40px 34px; row-gap: 6px; align-items: center; padding: 3px 18px 34px; }
.dialog-body label { padding-top: 1px; }
.field { display: flex; align-items: center; height: 100%; }
.selected { width: 117px; height: 40px; gap: 6px; background: #0a95da; color: #fff; }
.selected svg { width: 16px; height: 24px; }
.clear { margin-left: 16px; }
.combo { padding: 0 6px 0 4px; background: #fff; border: 2px solid #e2e2e2; border-radius: 3px; }
.extent-icon { width: 24px; height: 22px; }
.combo select { flex: 1; height: 34px; padding: 0 5px; border: 0; background: #fff; appearance: none; font: inherit; color: inherit; }
.value { padding-left: 10px; gap: 3px; }
.value input { width: 220px; height: 31px; padding: 0 4px; border: 1px solid #c5c5c5; font: inherit; color: inherit; }
.dialog-foot { display: flex; align-items: center; gap: 15px; height: 56px; padding: 0 16px 0 11px; border-top: 1px solid #bbb; }
.dialog-foot svg { margin-right: auto; }
.dialog-foot button { width: 90px; height: 29px; border: 1px solid #b8b8b8; background: #e8e8e8; font-size: 18px; color: #777; }

.hud { position: absolute; left: 1200px; top: 640px; display: flex; align-items: center; gap: 8px; height: 32px; padding: 0 4px 1px 7px; background: #f1f1f1; }
.hud-grip { width: 5px; height: 26px; margin-right: 16px; background: repeating-linear-gradient(135deg, #ccc 0 1px, transparent 1px 4px); }
.hud input { width: 99px; height: 25px; padding: 0 5px 0 0; border: 1px solid #c5c5c5; font: inherit; text-align: center; color: #444; }

.comments { position: absolute; left: 6px; bottom: 6px; padding-left: 36px; border-top: 0; }
.navbar { position: absolute; left: 50%; bottom: 6px; transform: translateX(-50%); display: flex; align-items: center; gap: 15px; width: 380px; height: 36px; padding-left: 4px; background: #f1f1f1; }
.navbar .wide { gap: 7px; margin-right: -6px; }
.navbar .tight { gap: 3px; margin-right: -5px; }
.navbar .display { margin-left: 12px; }
.status { position: absolute; right: 54px; bottom: 13px; font-size: 17px; font-weight: bold; }

/* Timeline */
.timeline { display: flex; align-items: center; height: 75px; padding: 0 20px 2px 16px; border-top: 3px solid #cbcbcb; background: #f1f1f1; }
.playback { display: flex; gap: 17px; }
.playback svg { width: 20px; height: 22px; fill: #4a4a4a; }
.features { position: relative; display: flex; margin-left: 29px; }
.features button { width: 36px; height: 36px; border-radius: 3px; }
.features .blue { background: #0a95da; }
.features .yellow { background: #e2e61c; }
.track { position: absolute; left: 17px; top: 35px; width: 184px; height: 12px; }
.marker { position: absolute; right: -9px; top: -4px; width: 18px; height: 49px; }
.settings { margin-left: auto; }
```
